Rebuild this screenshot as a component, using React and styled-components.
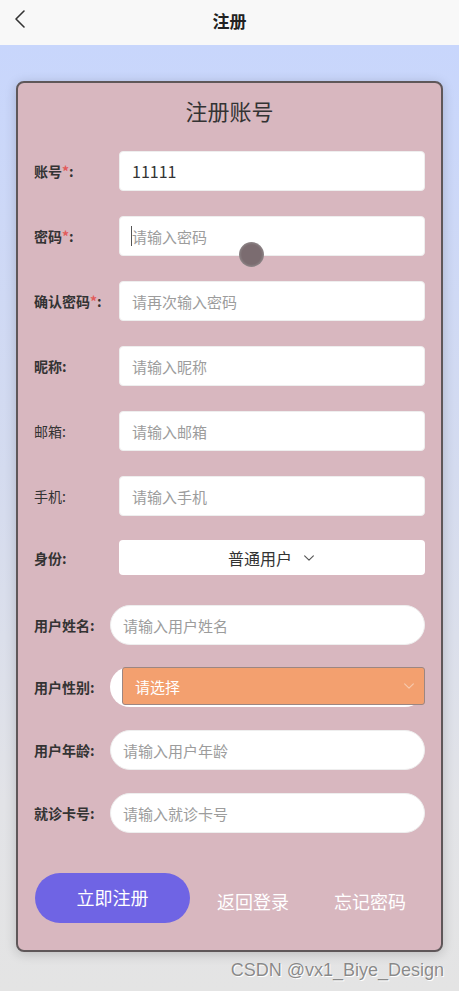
import React from 'react';
import styled, { createGlobalStyle } from 'styled-components';

const GlobalStyle = createGlobalStyle`
    html, body {
        margin: 0;
        padding: 0;
        font-family: "Noto Sans CJK SC", "Noto Sans", sans-serif;
    }
`;

const Page = styled.div`
    width: 459px;
    height: 991px;
    overflow: hidden;
    position: relative;
    display: flex;
    flex-direction: column;
`;

const NavBar = styled.header`
    height: 45px;
    flex: none;
    box-sizing: border-box;
    padding-bottom: 5px;
    background: #f8f8f8;
    display: flex;
    align-items: center;
    justify-content: center;
    position: relative;
`;

const NavTitle = styled.h2`
    margin: 0;
    font-size: 17px;
    font-weight: 700;
    color: #222;
    line-height: 1;
`;

const BackButton = styled.button`
    position: absolute;
    left: 8px;
    top: 7px;
    width: 24px;
    height: 24px;
    padding: 0;
    border: 0;
    background: none;
    display: flex;
    align-items: center;
    justify-content: center;
`;

const Content = styled.main`
    flex: 1;
    background: linear-gradient(180deg, #c8d6fc 0%, #d4dbef 45%, #e2e3e7 80%, #e4e4e4 100%);
    padding: 36px 16px 0;
    display: flex;
    flex-direction: column;
`;

const Card = styled.section`
    height: 871px;
    box-sizing: border-box;
    background: #d8b7bf;
    border: 2px solid #5f5759;
    border-radius: 8px;
    box-shadow: 0 2px 12px rgba(0, 0, 0, 0.18);
    padding: 12px 16px 0 16px;
    display: flex;
    flex-direction: column;
    position: relative;
`;

const CardTitle = styled.h1`
    margin: 0 0 26px;
    text-align: center;
    font-size: 22px;
    font-weight: 400;
    line-height: 30px;
    color: #333;
`;

const Row = styled.div`
    display: flex;
    align-items: center;
    height: ${p => p.$h || 40}px;
    margin-bottom: ${p => p.$mb ?? 25}px;
`;

const Label = styled.label`
    flex: none;
    width: ${p => p.$w || 85}px;
    font-size: 14px;
    font-weight: ${p => (p.$bold ? 700 : 400)};
    color: #333;
    white-space: nowrap;
`;

const Star = styled.span`
    color: #e25b5b;
`;

const TextInput = styled.input`
    flex: 1;
    min-width: 0;
    height: 40px;
    box-sizing: border-box;
    border: 1px solid #eee;
    border-radius: ${p => (p.$round ? 20 : 4)}px;
    background: #fff;
    padding: 0 12px;
    font-family: inherit;
    font-size: ${p => (p.$filled ? 16 : 15)}px;
    color: #333;
    outline: none;

    &::placeholder {
        color: #9c9c9c;
    }
`;

const InputWrap = styled.div`
    flex: 1;
    display: flex;
    position: relative;
`;

const Caret = styled.span`
    position: absolute;
    left: 12px;
    top: 10px;
    width: 1px;
    height: 20px;
    background: #555;
`;

const IdentitySelect = styled.div`
    flex: 1;
    height: 35px;
    background: #fff;
    border-radius: 4px;
    display: flex;
    align-items: center;
    justify-content: center;
    gap: 10px;
    font-size: 16px;
    color: #333;
`;

const PillShell = styled.div`
    flex: 1;
    height: 40px;
    background: #fff;
    border-radius: 20px;
    padding-left: 12px;
    display: flex;
    align-items: flex-start;
`;

const OrangeSelect = styled.div`
    flex: 1;
    height: 38px;
    box-sizing: border-box;
    background: #f3a06f;
    border: 1px solid #9c8682;
    border-radius: 3px;
    display: flex;
    align-items: center;
    justify-content: space-between;
    padding: 0 8px 0 12px;
    font-size: 15px;
    color: #fff;
`;

const Actions = styled.div`
    display: flex;
    align-items: center;
    margin-top: 40px;
    padding-left: 1px;
`;

const PrimaryButton = styled.button`
    width: 155px;
    height: 50px;
    border: 0;
    border-radius: 25px;
    background: #6f64e4;
    color: #fff;
    font-family: inherit;
    font-size: 18px;
    padding: 0 0 3px;
`;

const LinkButton = styled.button`
    border: 0;
    background: none;
    padding: 6px 0 0;
    color: #fff;
    font-family: inherit;
    font-size: 18px;
    margin-left: ${p => p.$ml}px;
`;

const Watermark = styled.div`
    text-align: right;
    padding: 8px 0 0;
    margin-right: -1px;
    font-family: "Liberation Sans", Arial, sans-serif;
    font-size: 18px;
    color: #8a8a8a;
    text-shadow: 0 0 1px #fff, 1px 1px 0 #fff;
`;

const TouchDot = styled.div`
    position: absolute;
    left: 239px;
    top: 242px;
    width: 25px;
    height: 25px;
    border-radius: 50%;
    background: radial-gradient(circle, #7b6c70 55%, #8d8587 70%, rgba(140, 135, 136, 0.4) 100%);
`;

const Chevron = ({ color = '#555', size = 14 }) => (
    <svg width={size} height={size} viewBox="0 0 16 16" fill="none">
        <path d="M3 5.5 L8 10.5 L13 5.5" stroke={color} strokeWidth="1.3" strokeLinecap="round" strokeLinejoin="round" />
    </svg>
);

function Field({ label, required, bold = true, placeholder, value, round, labelWidth, mb, caret }) {
    return (
        <Row $mb={mb}>
            <Label $bold={bold} $w={labelWidth}>
                {label}
                {required && <Star>*</Star>}:
            </Label>
            <InputWrap>
                <TextInput
                    $round={round}
                    $filled={!!value}
                    placeholder={placeholder}
                    defaultValue={value}
                />
                {caret && <Caret />}
            </InputWrap>
        </Row>
    );
}

export default function App() {
    return (
        <Page>
            <GlobalStyle />
            <NavBar>
                <BackButton aria-label="back">
                    <svg width="14" height="20" viewBox="0 0 14 20" fill="none">
                        <path d="M11 2 L3 10 L11 18" stroke="#333" strokeWidth="1.6" strokeLinecap="round" strokeLinejoin="round" />
                    </svg>
                </BackButton>
                <NavTitle>注册</NavTitle>
            </NavBar>
            <Content>
                <Card>
                    <CardTitle>注册账号</CardTitle>
                    <Field label="账号" required value="11111" />
                    <Field label="密码" required placeholder="请输入密码" caret />
                    <Field label="确认密码" required placeholder="请再次输入密码" />
                    <Field label="昵称" placeholder="请输入昵称" />
                    <Field label="邮箱" bold={false} placeholder="请输入邮箱" />
                    <Field label="手机" bold={false} placeholder="请输入手机" mb={24} />
                    <Row $h={35} $mb={30}>
                        <Label $bold>身份:</Label>
                        <IdentitySelect>
                            普通用户
                            <Chevron />
                        </IdentitySelect>
                    </Row>
                    <Field label="用户姓名" labelWidth={76} round placeholder="请输入用户姓名" mb={22} />
                    <Row $mb={23}>
                        <Label $bold $w={76}>用户性别:</Label>
                        <PillShell>
                            <OrangeSelect>
                                请选择
                                <Chevron color="#f7c9ad" />
                            </OrangeSelect>
                        </PillShell>
                    </Row>
                    <Field label="用户年龄" labelWidth={76} round placeholder="请输入用户年龄" mb={23} />
                    <Field label="就诊卡号" labelWidth={76} round placeholder="请输入就诊卡号" mb={0} />
                    <Actions>
                        <PrimaryButton>立即注册</PrimaryButton>
                        <LinkButton $ml={27}>返回登录</LinkButton>
                        <LinkButton $ml={45}>忘记密码</LinkButton>
                    </Actions>
                </Card>
                <Watermark>CSDN @vx1_Biye_Design</Watermark>
            </Content>
            <TouchDot />
        </Page>
    );
}
